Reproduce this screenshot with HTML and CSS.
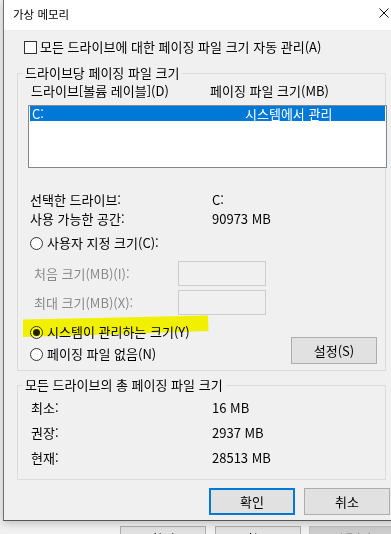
FILE: index.html
```html
<!DOCTYPE html>
<html lang="ko">
<head>
<meta charset="utf-8">
<title>가상 메모리</title>
<link rel="stylesheet" href="styles.css">
</head>
<body>
<div class="screen">
  <div class="dialog">
    <div class="titlebar">
      <span class="title">가상 메모리</span>
      <span class="close-btn">
        <svg width="10" height="10" viewBox="0 0 10 10"><path d="M0.5 0.5L9.5 9.5M9.5 0.5L0.5 9.5" stroke="#111" stroke-width="1" fill="none"/></svg>
      </span>
    </div>
    <div class="content">
      <div class="check-row"><span class="checkbox"></span><span>모든 드라이브에 대한 페이징 파일 크기 자동 관리(A)</span></div>

      <fieldset class="group group-drive">
        <legend>드라이브당 페이징 파일 크기</legend>
        <div class="list-head"><span class="head-c1">드라이브[볼륨 레이블](D)</span><span>페이징 파일 크기(MB)</span></div>
        <div class="listbox">
          <div class="list-item"><span class="item-c1">C:</span><span>시스템에서 관리</span></div>
        </div>
        <div class="info-row first"><span class="info-k">선택한 드라이브:</span><span>C:</span></div>
        <div class="info-row"><span class="info-k">사용 가능한 공간:</span><span>90973 MB</span></div>
        <div class="radio-row custom"><span class="radio"></span><span>사용자 지정 크기(C):</span></div>
        <div class="size-row first"><span class="size-label">처음 크기(MB)(I):</span><span class="textbox"></span></div>
        <div class="size-row"><span class="size-label">최대 크기(MB)(X):</span><span class="textbox"></span></div>
        <div class="opt-block">
          <div class="opt-list">
            <div class="radio-row"><span class="radio on"><span class="dot"></span></span><span>시스템이 관리하는 크기(Y)</span></div>
            <div class="radio-row"><span class="radio"></span><span>페이징 파일 없음(N)</span></div>
          </div>
          <span class="btn set-btn">설정(S)</span>
        </div>
      </fieldset>

      <fieldset class="group group-total">
        <legend>모든 드라이브의 총 페이징 파일 크기</legend>
        <div class="total-row first"><span class="total-k">최소:</span><span>16 MB</span></div>
        <div class="total-row"><span class="total-k">권장:</span><span>2937 MB</span></div>
        <div class="total-row"><span class="total-k">현재:</span><span>28513 MB</span></div>
      </fieldset>

      <div class="button-row">
        <span class="btn default">확인</span>
        <span class="btn">취소</span>
      </div>
    </div>
  </div>
  <div class="parent-bar">
    <span class="btn pbtn">확인</span>
    <span class="btn pbtn">취소</span>
    <span class="btn pbtn disabled">적용(A)</span>
  </div>
  <svg class="highlight" width="391" height="534" viewBox="0 0 391 534">
    <polygon points="23,319.5 120,317.5 208,315.5 208.5,331 120,334 23,337" fill="#ffff00"/>
  </svg>
</div>
</body>
</html>
```

FILE: styles.css
```css
html, body {
  margin: 0;
  padding: 0;
}
html {
  overflow: hidden;
}
body {
  width: 391px;
  height: 534px;
  overflow: hidden;
  background: #f0f0f0;
  font-family: "Noto Sans CJK KR", "Noto Sans", sans-serif;
  font-size: 13px;
  color: #000;
}
.screen {
  position: relative;
  width: 391px;
  height: 534px;
  overflow: hidden;
  padding-left: 3px;
  box-sizing: border-box;
}
.dialog {
  position: relative;
  z-index: 1;
  width: 404px;
  box-sizing: border-box;
  border-left: 1px solid #707070;
  border-bottom: 1px solid #555;
  background: #f0f0f0;
  box-shadow: 0 2px 8px rgba(0, 0, 0, 0.22);
}
.titlebar {
  height: 30px;
  background: #fff;
  display: flex;
  align-items: center;
  padding-left: 9px;
}
.title {
  font-size: 11.5px;
  line-height: 16px;
  margin-top: -3px;
}
.close-btn {
  margin-left: auto;
  width: 46px;
  height: 30px;
  display: flex;
  align-items: center;
  justify-content: center;
  padding-bottom: 5px;
  box-sizing: border-box;
}
.close-btn svg {
  display: block;
}
.content {
  padding: 9px 17px 5px 0;
}
.check-row {
  display: flex;
  align-items: center;
  height: 16px;
  line-height: 16px;
  padding-left: 20px;
  gap: 3px;
}
.checkbox {
  width: 13px;
  height: 13px;
  box-sizing: border-box;
  border: 1px solid #333;
  background: #fff;
}
.group {
  margin: 0 0 0 13px;
  padding: 0;
  width: 369px;
  box-sizing: border-box;
  border: 1px solid #dcdcdc;
  min-width: 0;
}
.group legend {
  padding: 0 3px;
  margin-left: 4px;
  line-height: 16px;
}
.group-drive {
  margin-top: 10px;
  padding-bottom: 5px;
}
.list-head {
  display: flex;
  height: 16px;
  line-height: 16px;
  margin-top: 2px;
  padding-left: 13px;
}
.head-c1 {
  width: 179px;
}
.listbox {
  margin: 6px 0 0 10px;
  width: 359px;
  height: 63px;
  box-sizing: border-box;
  border: 1px solid #828790;
  background: #fff;
  padding: 0 1px;
}
.list-item {
  display: flex;
  height: 15px;
  line-height: 15px;
  background: #0078d7;
  color: #fff;
  padding-left: 2px;
}
.item-c1 {
  width: 213px;
}
.info-row {
  display: flex;
  height: 19px;
  line-height: 19px;
  padding-left: 12px;
}
.info-row.first {
  margin-top: 22px;
}
.info-k {
  width: 182px;
}
.radio-row {
  display: flex;
  align-items: center;
  gap: 4px;
  padding-left: 12px;
  height: 22px;
  line-height: 16px;
}
.radio-row.custom {
  height: 20px;
  margin-top: 5px;
}
.radio {
  width: 13px;
  height: 13px;
  box-sizing: border-box;
  border: 1px solid #333;
  border-radius: 50%;
  background: #fff;
  display: flex;
  align-items: center;
  justify-content: center;
  flex: none;
}
.dot {
  width: 7px;
  height: 7px;
  border-radius: 50%;
  background: #222;
}
.size-row {
  display: flex;
  align-items: center;
  height: 25px;
  padding-left: 16px;
  margin-top: 4px;
}
.size-row.first {
  margin-top: 8px;
}
.size-label {
  width: 144px;
  color: #8a8a8a;
}
.textbox {
  width: 88px;
  height: 25px;
  box-sizing: border-box;
  border: 1px solid #cccccc;
  background: #f0f0f0;
}
.opt-block {
  display: flex;
  margin-top: 6px;
}
.btn {
  width: 86px;
  height: 27px;
  box-sizing: border-box;
  border: 1px solid #adadad;
  background: #e1e1e1;
  display: flex;
  align-items: center;
  justify-content: center;
  line-height: 16px;
  flex: none;
}
.btn.default {
  border: 2px solid #0078d7;
}
.set-btn {
  margin: 16px 8px 0 auto;
}
.group-total {
  margin-top: 6px;
  padding-bottom: 9px;
}
.total-row {
  display: flex;
  height: 25px;
  line-height: 25px;
  padding-left: 13px;
}
.total-row.first {
  margin-top: 2px;
}
.total-k {
  width: 181px;
}
.button-row {
  display: flex;
  justify-content: flex-end;
  gap: 9px;
  margin-top: 8px;
}
.parent-bar {
  display: flex;
  gap: 9px;
  padding: 5px 0 0 117px;
}
.pbtn {
  height: 23px;
  align-items: flex-start;
  padding-top: 4px;
}
.pbtn.disabled {
  background: #cccccc;
  border-color: #bfbfbf;
  color: #838383;
  margin-left: -1px;
}
.highlight {
  position: absolute;
  left: 0;
  top: 0;
  z-index: 2;
  pointer-events: none;
  mix-blend-mode: multiply;
}
```
